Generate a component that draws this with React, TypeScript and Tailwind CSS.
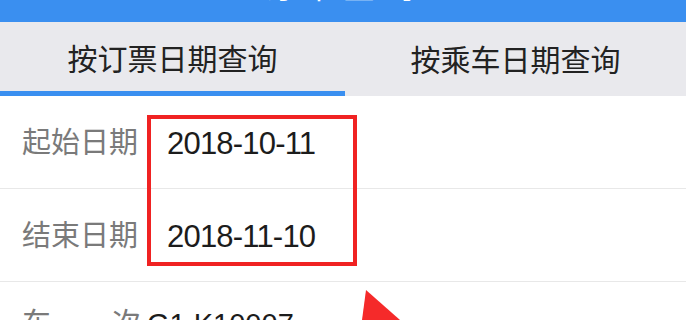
import React from 'react';

const rows = [
  { label: '起始日期', value: '2018-10-11' },
  { label: '结束日期', value: '2018-11-10' },
];

const App = () => {
  return (
    <div
      className="relative w-[686px] h-[320px] overflow-hidden bg-white"
      style={{ fontFamily: '"Liberation Sans", "Noto Sans CJK SC", sans-serif' }}
    >
      {/* title bar, mostly cut off */}
      <div className="h-[22px] bg-[#3a8ff0] overflow-hidden flex justify-center">
        <div className="-mt-[29px] text-[32px] leading-[32px] text-white tracking-[8px]">订单查询</div>
      </div>

      {/* tabs */}
      <div className="flex h-[74px] bg-[#e9e9ed]">
        <div className="w-[345px] flex items-center justify-center border-b-[5px] border-[#3a8ff0] pt-[6px]">
          <span className="text-[30px] text-[#222]">按订票日期查询</span>
        </div>
        <div className="flex-1 flex items-center justify-center pt-[2px]">
          <span className="text-[30px] text-[#222]">按乘车日期查询</span>
        </div>
      </div>

      {/* date rows */}
      {rows.map((row) => (
        <div key={row.label} className="flex items-center h-[93px] border-b border-[#e8e8e8] pl-[22px] pt-[4px]">
          <span className="w-[145px] text-[29px] text-[#7a7a7a]">{row.label}</span>
          <span className="text-[31px] text-[#1c1c1c] tracking-[-0.8px]">{row.value}</span>
        </div>
      ))}
      <div className="flex pl-[22px] pt-[21px] text-[29px] text-[#7a7a7a] whitespace-nowrap">
        <span>车</span>
        <span className="ml-[61px]">次</span>
        <span className="ml-[6px] text-[#1c1c1c]">G1 K10007</span>
      </div>

      {/* red highlight box */}
      <div className="absolute left-[147px] top-[115px] w-[210px] h-[151px] border-4 border-[#f02222]" />

      {/* red arrow */}
      <svg className="absolute left-[360px] top-[286px]" width="80" height="34" viewBox="0 0 80 34">
        <polygon points="6,4 40,34 2,34" fill="#f52a2a" />
      </svg>
    </div>
  );
};

export default App;
